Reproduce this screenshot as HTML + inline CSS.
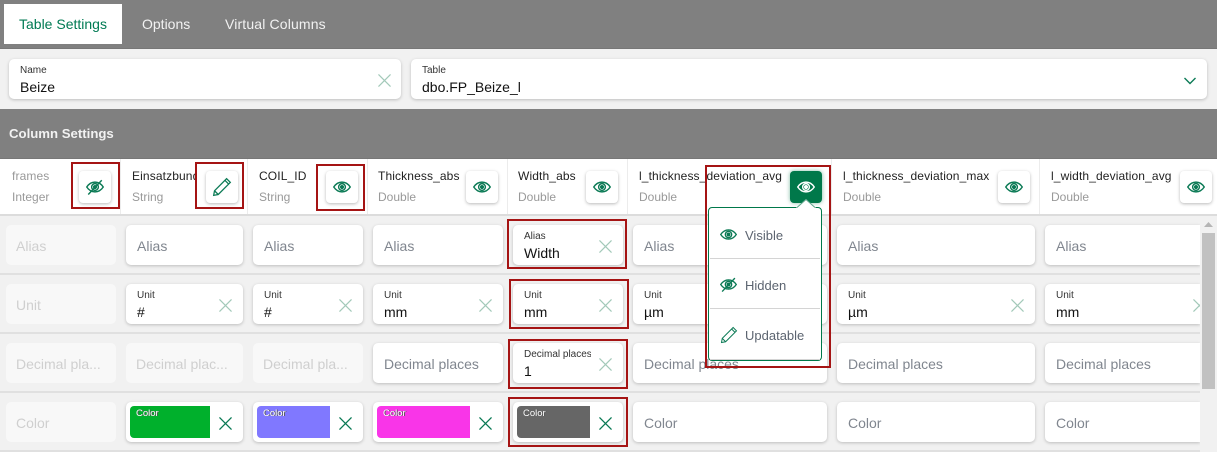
<!DOCTYPE html>
<html><head><meta charset="utf-8"><style>
html,body{margin:0;padding:0;width:1217px;height:452px;overflow:hidden;background:#f1f1f1;font-family:"Liberation Sans",sans-serif}
div,span,svg{position:absolute;box-sizing:border-box}
.t{white-space:nowrap;line-height:16px}
.card{background:#fff;border-radius:5px;box-shadow:0 1px 3px rgba(0,0,0,.22);height:40px;overflow:hidden}
.off{background:#f8f8f8;box-shadow:none}
.ph{left:11px;top:13px;font-size:14px;line-height:16px;color:#80868f;white-space:nowrap}
.off .ph{left:10px;color:#cfcfcf}
.lb{left:11px;top:6px;font-size:10px;line-height:12px;color:#333;white-space:nowrap}
.v{left:11px;top:20px;font-size:14px;line-height:16px;color:#111;white-space:nowrap}
.x{width:13px;height:13px;top:15px;stroke:#a3c9b9;stroke-width:1.3;fill:none}
.xd{stroke:#0b7a55;stroke-width:1.4}
.sw{left:4px;top:4px;height:32px;border-radius:4px 0 0 4px}
.sw span{left:6px;top:2px;font-size:9.5px;line-height:12px;color:#fff;text-shadow:1px 0 0 #555}
.sep{left:0;width:1200px;height:2px;background:#e0e0e0}
.dv{top:159px;width:1px;height:55px;background:#ececec}
.n{top:168px;font-size:12px;color:#222;letter-spacing:.12px}
.d{top:189px;font-size:12px;color:#999}
.b{width:32px;height:32px;top:171px;background:#fff;border-radius:4px;box-shadow:0 1px 3px rgba(0,0,0,.28)}
.b svg{left:7px;top:7px;width:18px;height:18px}
.i{fill:none;stroke:#0b7a55;stroke-width:1.9}
.r{border:2px solid #a51414}
.m{font-size:13px;color:#5c6470}
</style></head><body>
<svg width="0" height="0" style="position:absolute">
<symbol id="eye" viewBox="0 0 24 24"><path d="M1 12C4 7.500 8 5.500 12 5.500S20 7.500 23 12C20 16.500 16 18.500 12 18.500S4 16.500 1 12Z"/><circle cx="12" cy="12" r="4.500"/><circle cx="12" cy="12" r="1.800" fill="currentColor"/></symbol>
<symbol id="hid" viewBox="0 0 24 24"><path d="M1 12C4 7.500 8 5.500 12 5.500S20 7.500 23 12C20 16.500 16 18.500 12 18.500S4 16.500 1 12Z"/><circle cx="12" cy="12" r="4.500"/><circle cx="12" cy="12" r="1.800" fill="currentColor"/><path d="M21 3L3 22"/></symbol>
<symbol id="pen" viewBox="0 0 24 24"><path d="M2 22L3 16.500 17.500 2 22 6.500 7.500 21ZM3 16.500L7.500 21M15.500 4L20 8.500"/></symbol>
<symbol id="x" viewBox="0 0 14 14"><path d="M.5 .5L13.500 13.500M13.500 .5L.5 13.500"/></symbol>
</svg>

<div style="left:0;top:0;width:1217px;height:49px;background:#808080;border-bottom:1px solid #777"></div>
<div style="left:4px;top:4px;width:118px;height:40px;background:#fff"></div>
<div class="t" style="left:19px;top:16px;font-size:14px;color:#007a53">Table Settings</div>
<div class="t" style="left:142px;top:16px;font-size:14px;color:#f2f2f2">Options</div>
<div class="t" style="left:225px;top:16px;font-size:14px;letter-spacing:.15px;color:#f2f2f2">Virtual Columns</div>

<div class="card" style="left:9px;top:59px;width:392px"><span class="lb">Name</span><span class="v">Beize</span><svg class="x" style="left:369px"><use href="#x"/></svg></div>
<div class="card" style="left:411px;top:59px;width:796px"><span class="lb">Table</span><span class="v">dbo.FP_Beize_l</span><svg style="left:773px;top:18px;width:12px;height:8px" viewBox="0 0 12 8" fill="none" stroke="#0b7a55" stroke-width="1.400"><path d="M.5 1L6 6.500 11.500 1"/></svg></div>

<div style="left:0;top:109px;width:1217px;height:50px;background:#808080;border-bottom:1px solid #777"></div>
<div class="t" style="left:9px;top:126px;font-size:13.200px;font-weight:bold;color:#f2f2f2">Column Settings</div>

<div style="left:0;top:159px;width:1217px;height:55px;background:#fff"></div>
<div style="left:0;top:214px;width:1217px;height:2px;background:#dcdcdc"></div>
<div class="dv" style="left:120px"></div><div class="dv" style="left:247px"></div><div class="dv" style="left:367px"></div><div class="dv" style="left:507px"></div><div class="dv" style="left:627px"></div><div class="dv" style="left:831px"></div><div class="dv" style="left:1039px"></div>

<div class="t n" style="left:12px;color:#999">frames</div><div class="t d" style="left:12px">Integer</div>
<div class="t n" style="left:132px;width:64px;overflow:hidden">Einsatzbund</div><div class="t d" style="left:132px">String</div>
<div class="t n" style="left:259px">COIL_ID</div><div class="t d" style="left:259px">String</div>
<div class="t n" style="left:378px">Thickness_abs</div><div class="t d" style="left:378px">Double</div>
<div class="t n" style="left:518px">Width_abs</div><div class="t d" style="left:518px">Double</div>
<div class="t n" style="left:639px">l_thickness_deviation_avg</div><div class="t d" style="left:639px">Double</div>
<div class="t n" style="left:843px">l_thickness_deviation_max</div><div class="t d" style="left:843px">Double</div>
<div class="t n" style="left:1051px">l_width_deviation_avg</div><div class="t d" style="left:1051px">Double</div>

<div class="b" style="left:79px"><svg class="i" style="color:#0b7a55"><use href="#hid"/></svg></div>
<div class="b" style="left:206px"><svg class="i" style="left:6px;top:6px;width:20px;height:20px;stroke-width:1.500"><use href="#pen"/></svg></div>
<div class="b" style="left:326px"><svg class="i" style="color:#0b7a55"><use href="#eye"/></svg></div>
<div class="b" style="left:466px"><svg class="i" style="color:#0b7a55"><use href="#eye"/></svg></div>
<div class="b" style="left:586px"><svg class="i" style="color:#0b7a55"><use href="#eye"/></svg></div>
<div class="b" style="left:998px"><svg class="i" style="color:#0b7a55"><use href="#eye"/></svg></div>
<div class="b" style="left:1180px"><svg class="i" style="color:#0b7a55"><use href="#eye"/></svg></div>

<div class="sep" style="top:273px"></div><div class="sep" style="top:332px"></div><div class="sep" style="top:391px"></div><div class="sep" style="top:450px"></div>

<!-- Alias row -->
<div class="card off" style="left:6px;top:225px;width:110px"><span class="ph">Alias</span></div>
<div class="card" style="left:126px;top:225px;width:117px"><span class="ph">Alias</span></div>
<div class="card" style="left:253px;top:225px;width:110px"><span class="ph">Alias</span></div>
<div class="card" style="left:373px;top:225px;width:130px"><span class="ph">Alias</span></div>
<div class="card" style="left:513px;top:225px;width:110px"><span class="lb">Alias</span><span class="v">Width</span><svg class="x" style="left:86px"><use href="#x"/></svg></div>
<div class="card" style="left:633px;top:225px;width:194px"><span class="ph">Alias</span></div>
<div class="card" style="left:837px;top:225px;width:198px"><span class="ph">Alias</span></div>
<div class="card" style="left:1045px;top:225px;width:155px;border-radius:5px 0 0 5px"><span class="ph">Alias</span></div>

<!-- Unit row -->
<div class="card off" style="left:6px;top:284px;width:110px"><span class="ph">Unit</span></div>
<div class="card" style="left:126px;top:284px;width:117px"><span class="lb">Unit</span><span class="v">#</span><svg class="x" style="left:93px"><use href="#x"/></svg></div>
<div class="card" style="left:253px;top:284px;width:110px"><span class="lb">Unit</span><span class="v">#</span><svg class="x" style="left:86px"><use href="#x"/></svg></div>
<div class="card" style="left:373px;top:284px;width:130px"><span class="lb">Unit</span><span class="v">mm</span><svg class="x" style="left:106px"><use href="#x"/></svg></div>
<div class="card" style="left:513px;top:284px;width:110px"><span class="lb">Unit</span><span class="v">mm</span><svg class="x" style="left:86px"><use href="#x"/></svg></div>
<div class="card" style="left:633px;top:284px;width:194px"><span class="lb">Unit</span><span class="v">µm</span></div>
<div class="card" style="left:837px;top:284px;width:198px"><span class="lb">Unit</span><span class="v">µm</span><svg class="x" style="left:174px"><use href="#x"/></svg></div>
<div class="card" style="left:1045px;top:284px;width:155px;border-radius:5px 0 0 5px"><span class="lb">Unit</span><span class="v">mm</span><svg class="x" style="left:148px"><use href="#x"/></svg></div>

<!-- Decimal row -->
<div class="card off" style="left:6px;top:343px;width:110px"><span class="ph">Decimal pla...</span></div>
<div class="card off" style="left:126px;top:343px;width:117px"><span class="ph">Decimal plac...</span></div>
<div class="card off" style="left:253px;top:343px;width:110px"><span class="ph">Decimal pla...</span></div>
<div class="card" style="left:373px;top:343px;width:130px"><span class="ph">Decimal places</span></div>
<div class="card" style="left:513px;top:343px;width:110px"><span class="lb" style="width:67px;overflow:hidden">Decimal places</span><span class="v">1</span><svg class="x" style="left:86px"><use href="#x"/></svg></div>
<div class="card" style="left:633px;top:343px;width:194px"><span class="ph">Decimal places</span></div>
<div class="card" style="left:837px;top:343px;width:198px"><span class="ph">Decimal places</span></div>
<div class="card" style="left:1045px;top:343px;width:155px;border-radius:5px 0 0 5px"><span class="ph">Decimal places</span></div>

<!-- Color row -->
<div class="card off" style="left:6px;top:402px;width:110px"><span class="ph">Color</span></div>
<div class="card" style="left:126px;top:402px;width:117px"><div class="sw" style="width:80px;background:#00b02c"><span>Color</span></div><svg class="x xd" style="left:93px"><use href="#x"/></svg></div>
<div class="card" style="left:253px;top:402px;width:110px"><div class="sw" style="width:73px;background:#8078ff"><span>Color</span></div><svg class="x xd" style="left:86px"><use href="#x"/></svg></div>
<div class="card" style="left:373px;top:402px;width:130px"><div class="sw" style="width:93px;background:#f935e8"><span>Color</span></div><svg class="x xd" style="left:106px"><use href="#x"/></svg></div>
<div class="card" style="left:513px;top:402px;width:110px"><div class="sw" style="width:73px;background:#666"><span>Color</span></div><svg class="x xd" style="left:86px"><use href="#x"/></svg></div>
<div class="card" style="left:633px;top:402px;width:194px"><span class="ph">Color</span></div>
<div class="card" style="left:837px;top:402px;width:198px"><span class="ph">Color</span></div>
<div class="card" style="left:1045px;top:402px;width:155px;border-radius:5px 0 0 5px"><span class="ph">Color</span></div>

<!-- Scrollbar -->
<div style="left:1200px;top:216px;width:17px;height:236px;background:#f1f1f1"></div>
<div style="left:1202px;top:233px;width:13px;height:156px;background:#c1c1c1"></div>
<svg style="left:1204px;top:222px;width:9px;height:5px" viewBox="0 0 9 5"><path d="M4.500 0L9 5H0Z" fill="#b5b5b5"/></svg>

<!-- Popup -->
<div style="left:790px;top:171px;width:32px;height:32px;background:#00784a;border-radius:4px;box-shadow:0 0 4px rgba(0,120,74,.5)"><svg style="left:7px;top:7px;width:18px;height:18px;fill:none;stroke:#fff;stroke-width:1.900;color:#fff"><use href="#eye"/></svg></div>
<div style="left:708px;top:207px;width:114px;height:154px;background:#fff;border:1px solid #00784a;border-radius:4px"></div>
<svg style="left:796px;top:199px;width:20px;height:9px" viewBox="0 0 20 9"><path d="M0 9L10 0 20 9" fill="#fff"/><path d="M1 8.500L10 .5 19 8.500" fill="none" stroke="#5da58a"/></svg>
<div style="left:710px;top:258px;width:110px;height:1px;background:#d4d4d4"></div>
<div style="left:710px;top:308px;width:110px;height:1px;background:#d4d4d4"></div>
<div style="left:710px;top:359px;width:110px;height:1px;background:#d4d4d4"></div>
<svg class="i" style="left:720px;top:226px;width:17px;height:17px;color:#0b7a55"><use href="#eye"/></svg>
<div class="t m" style="left:745px;top:228px;width:70px">Visible</div>
<svg class="i" style="left:720px;top:276px;width:17px;height:17px;color:#0b7a55"><use href="#hid"/></svg>
<div class="t m" style="left:745px;top:278px;width:70px">Hidden</div>
<svg class="i" style="left:720px;top:326px;width:18px;height:18px;stroke-width:1.300"><use href="#pen"/></svg>
<div class="t m" style="left:745px;top:328px;width:70px">Updatable</div>

<!-- Red outlines -->
<div class="r" style="left:71px;top:162px;width:49px;height:47px"></div>
<div class="r" style="left:195px;top:162px;width:49px;height:47px"></div>
<div class="r" style="left:316px;top:164px;width:49px;height:47px"></div>
<div class="r" style="left:507px;top:219px;width:120px;height:50px"></div>
<div class="r" style="left:509px;top:279px;width:120px;height:50px"></div>
<div class="r" style="left:508px;top:339px;width:120px;height:50px"></div>
<div class="r" style="left:508px;top:397px;width:120px;height:50px"></div>
<div class="r" style="left:705px;top:165px;width:126px;height:203px"></div>
</body></html>
